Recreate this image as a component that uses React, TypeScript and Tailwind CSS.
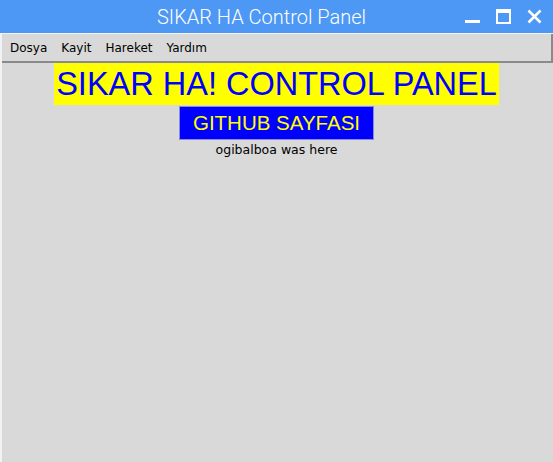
import React from "react";

export default function App() {
  return (
    <div className="w-[553px] h-[462px] bg-[#d9d9d9] flex flex-col overflow-hidden">
      <div className="h-[33px] bg-[#4d98f4] flex items-center shrink-0">
        <div
          className="flex-1 text-center text-white text-[20px] pl-[58px]"
          style={{ fontFamily: "Roboto, 'Liberation Sans', sans-serif", fontWeight: 300 }}
        >
          SIKAR HA Control Panel
        </div>
        <div className="flex items-center gap-[16px] pr-[11px]">
          <svg width="15" height="15" viewBox="0 0 15 15">
            <rect x="0" y="11" width="15" height="3" fill="#fff" />
          </svg>
          <svg width="15" height="15" viewBox="0 0 15 15">
            <rect x="1" y="1" width="13" height="13" fill="none" stroke="#fff" strokeWidth="2" />
            <rect x="1" y="1" width="13" height="3" fill="#fff" />
          </svg>
          <svg width="15" height="15" viewBox="0 0 15 15">
            <path d="M1.5 1.5 L13.5 13.5 M13.5 1.5 L1.5 13.5" stroke="#fff" strokeWidth="2.6" />
          </svg>
        </div>
      </div>
      <div className="h-[1px] bg-[#f2f2f2] shrink-0" />
      <div className="flex flex-1 flex-col border-l-[2px] border-[#f2f2f2]">
        <div
          className="h-[29px] flex items-center gap-[14px] pl-[8px] border-r-[2px] border-b-[2px] border-[#8a8a8a] text-[12px] text-black shrink-0"
          style={{ fontFamily: "'DejaVu Sans', sans-serif" }}
        >
          <span>Dosya</span>
          <span>Kayit</span>
          <span>Hareket</span>
          <span>Yardım</span>
        </div>
        <div className="flex flex-col items-center pr-[2px]">
          <div
            className="bg-[#ffff00] text-[#0000ff] text-[32.5px] leading-[42px] px-[2px]"
            style={{ fontFamily: "'Liberation Sans', Arial, sans-serif" }}
          >
            SIKAR HA! CONTROL PANEL
          </div>
          <div
            className="mt-[1px] w-[195px] h-[34px] bg-[#0000ff] border border-[#8a8ad8] flex items-center justify-center text-[#ffff00] text-[20.5px]"
            style={{ fontFamily: "'Liberation Sans', Arial, sans-serif" }}
          >
            GITHUB SAYFASI
          </div>
          <div
            className="text-[12.5px] text-black leading-[20px]"
            style={{ fontFamily: "'DejaVu Sans', sans-serif" }}
          >
            ogibalboa was here
          </div>
        </div>
      </div>
    </div>
  );
}
